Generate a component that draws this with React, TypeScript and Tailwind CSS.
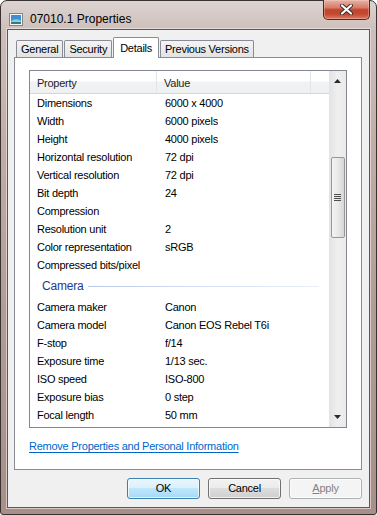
import React from 'react';

const imageRows: [string, string][] = [
  ['Dimensions', '6000 x 4000'],
  ['Width', '6000 pixels'],
  ['Height', '4000 pixels'],
  ['Horizontal resolution', '72 dpi'],
  ['Vertical resolution', '72 dpi'],
  ['Bit depth', '24'],
  ['Compression', ''],
  ['Resolution unit', '2'],
  ['Color representation', 'sRGB'],
  ['Compressed bits/pixel', ''],
];

const cameraRows: [string, string][] = [
  ['Camera maker', 'Canon'],
  ['Camera model', 'Canon EOS Rebel T6i'],
  ['F-stop', 'f/14'],
  ['Exposure time', '1/13 sec.'],
  ['ISO speed', 'ISO-800'],
  ['Exposure bias', '0 step'],
  ['Focal length', '50 mm'],
];

function Row({ name, value }: { name: string; value: string }) {
  return (
    <div className="flex h-[18px] items-center shrink-0">
      <div className="w-[128px] pl-[7px] whitespace-nowrap">{name}</div>
      <div className="pl-[7px] whitespace-nowrap">{value}</div>
    </div>
  );
}

function Tab({ label, active }: { label: string; active?: boolean }) {
  if (active) {
    return (
      <div className="relative z-10 -mb-px h-[21px] px-[6px] flex items-start pt-[2px] bg-white border border-b-0 border-[#898c95] rounded-t-[2px]">
        {label}
      </div>
    );
  }
  return (
    <div className="mt-[3px] h-[17px] px-[4px] flex items-center bg-gradient-to-b from-[#f4f4f4] to-[#e3e3e3] border border-b-0 border-[#898c95] rounded-t-[2px]">
      {label}
    </div>
  );
}

function Button({ label, kind }: { label: React.ReactNode; kind: 'ok' | 'normal' | 'disabled' }) {
  const styles = {
    ok: 'border-[#3c7fb1] bg-[linear-gradient(180deg,#eaf6fd_0%,#d9f0fc_50%,#bee6fd_50%,#a7d9f5_100%)] text-black',
    normal: 'border-[#707070] bg-[linear-gradient(180deg,#f2f2f2_0%,#ebebeb_50%,#dddddd_50%,#cfcfcf_100%)] text-black',
    disabled: 'border-[#adb2b5] bg-[#f4f4f4] text-[#838383]',
  }[kind];
  return (
    <div className={`w-[73px] h-[21px] rounded-[3px] border flex items-center justify-center shadow-[inset_0_0_0_1px_rgba(255,255,255,0.7)] ${styles}`}>
      {label}
    </div>
  );
}

function Scrollbar() {
  return (
    <div className="w-[17px] bg-gradient-to-r from-[#e3e3e3] via-[#efefef] to-[#eaeaea] flex flex-col items-center shrink-0">
      <div className="h-[20px] flex items-center justify-center">
        <svg width="7" height="4" viewBox="0 0 7 4"><path d="M0 4 L3.5 0 L7 4 Z" fill="#2b2b2b" /></svg>
      </div>
      <div className="h-[66px]" />
      <div className="w-[14px] h-[81px] rounded-[2px] border border-[#969696] bg-gradient-to-r from-[#f3f3f3] via-[#e9e9e9] to-[#d6d6d6] flex flex-col items-center justify-center gap-[1px]">
        <div className="w-[7px] h-px bg-[#4d4d4d]" />
        <div className="w-[7px] h-px bg-[#4d4d4d]" />
        <div className="w-[7px] h-px bg-[#4d4d4d]" />
        <div className="w-[7px] h-px bg-[#4d4d4d]" />
      </div>
      <div className="flex-1" />
      <div className="h-[20px] flex items-center justify-center">
        <svg width="7" height="4" viewBox="0 0 7 4"><path d="M0 0 L3.5 4 L7 0 Z" fill="#2b2b2b" /></svg>
      </div>
    </div>
  );
}

export default function App() {
  return (
    <div className="w-[377px] h-[515px] bg-white font-['Liberation_Sans',Arial,sans-serif] text-[11px] tracking-[-0.25px] text-black">
      <div className="w-[377px] h-[515px] flex flex-col rounded-t-[7px] rounded-b-[3px] border border-[#3a3230] bg-[linear-gradient(180deg,#dcd4d1_0%,#cdbeb9_6%,#c2afaa_25%,#b29c97_60%,#a88f89_100%)] px-[5px] pb-[6px]">
        {/* title bar */}
        <div className="h-[28px] flex items-start pl-[3px] pr-px">
          <div className="flex items-center gap-[7px] pt-[9px]">
            <svg width="14" height="13" viewBox="0 0 14 13">
              <rect x="0.5" y="0.5" width="13" height="12" fill="#f4f6f8" stroke="#7b8791" />
              <rect x="2" y="2" width="10" height="5" fill="#3f8fd0" />
              <rect x="2" y="7" width="10" height="4" fill="#2f7f7a" />
              <path d="M2 8 Q6 5 12 7.5 L12 9 L2 9 Z" fill="#8fc9e6" />
            </svg>
            <span className="text-[12px] tracking-normal text-black">07010.1 Properties</span>
          </div>
          <div className="ml-auto -mt-px w-[47px] h-[20px] rounded-b-[5px] border border-t-0 border-[#5e2217] bg-[linear-gradient(180deg,#e7b2a6_0%,#d77c68_40%,#c2432c_52%,#c44a33_75%,#de7a62_100%)] flex items-center justify-center shadow-[inset_0_0_0_1px_rgba(255,220,210,0.35)]">
            <svg width="13" height="11" viewBox="0 0 13 11">
              <path d="M2 1.5 L11 9.5 M11 1.5 L2 9.5" stroke="#3b2a28" strokeWidth="4" strokeLinecap="round" />
              <path d="M2 1.5 L11 9.5 M11 1.5 L2 9.5" stroke="#ffffff" strokeWidth="2.2" strokeLinecap="round" />
            </svg>
          </div>
        </div>

        {/* client area */}
        <div className="flex-1 border border-[#f3eeec]/60">
          <div className="h-full border border-[#5f5654] bg-[#f0f0f0] flex flex-col px-[6px] pt-[7px] pb-[8px]">
            {/* tabs */}
            <div className="flex items-start h-[20px] pl-[2px] gap-px">
              <Tab label="General" />
              <Tab label="Security" />
              <Tab label="Details" active />
              <Tab label="Previous Versions" />
            </div>

            {/* tab page */}
            <div className="w-[348px] h-[413px] border border-[#898c95] bg-white flex flex-col px-[14px] pt-[12px]">
              <div className="w-[318px] h-[358px] border border-[#828790] flex overflow-hidden">
                <div className="w-[299px] flex flex-col overflow-hidden">
                  {/* header */}
                  <div className="h-[23px] shrink-0 flex bg-[linear-gradient(180deg,#ffffff_0%,#ffffff_45%,#f1f2f4_50%,#eef0f2_100%)] border-b border-[#d5d5d5]">
                    <div className="w-[127px] pl-[7px] pt-[2px] flex items-center border-r border-[#e3e5e8] text-[#1e1e1e]">Property</div>
                    <div className="w-[154px] pl-[7px] pt-[2px] flex items-center border-r border-[#e3e5e8] text-[#1e1e1e]">Value</div>
                    <div className="flex-1" />
                  </div>
                  {imageRows.map(([n, v]) => (
                    <Row key={n} name={n} value={v} />
                  ))}
                  {/* group header */}
                  <div className="h-[24px] shrink-0 flex items-center pl-[12px] pr-[10px] gap-[5px]">
                    <span className="text-[#1e3991] text-[12px] tracking-[-0.2px]">Camera</span>
                    <div className="flex-1 h-px bg-gradient-to-r from-[#b9c8ea] via-[#d6e0f4] to-[#e9eef9]" />
                  </div>
                  {cameraRows.map(([n, v]) => (
                    <Row key={n} name={n} value={v} />
                  ))}
                </div>
                <Scrollbar />
              </div>
              <div className="mt-[10px] text-[#0066cc] underline underline-offset-[2px]">
                Remove Properties and Personal Information
              </div>
            </div>

            {/* buttons */}
            <div className="mt-[8px] flex justify-end gap-[8px] pr-px">
              <Button label="OK" kind="ok" />
              <Button label="Cancel" kind="normal" />
              <Button label={<span><span className="underline">A</span>pply</span>} kind="disabled" />
            </div>
          </div>
        </div>
      </div>
    </div>
  );
}
